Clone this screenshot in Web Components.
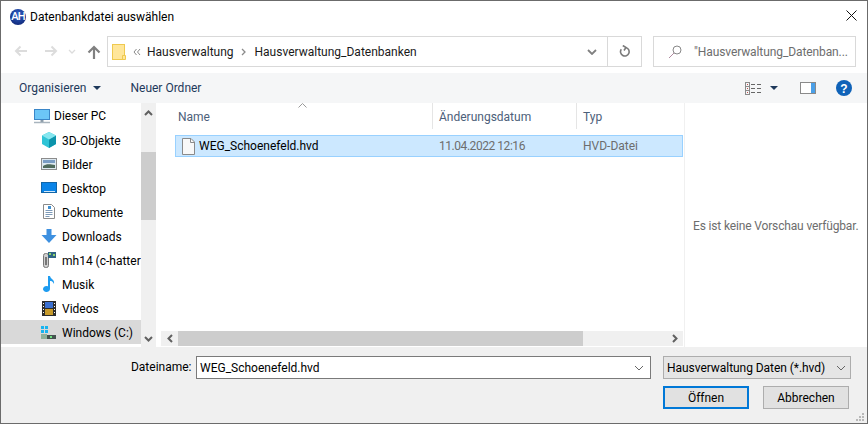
<!DOCTYPE html>
<html lang="de">
<head>
<meta charset="utf-8">
<title>Datenbankdatei auswählen</title>
<style>
  html, body { margin: 0; padding: 0; background: #fff; }
</style>
</head>
<body>
<file-dialog>
  <title-bar slot="title">Datenbankdatei auswählen</title-bar>
  <nav-bar slot="nav"></nav-bar>
  <tool-bar slot="tools"></tool-bar>
  <nav-pane slot="side"></nav-pane>
  <file-list slot="list"></file-list>
  <preview-pane slot="preview">Es ist keine Vorschau verfügbar.</preview-pane>
  <dialog-footer slot="footer"></dialog-footer>
</file-dialog>

<script>
const FONT = `font: 12px/16px Roboto, "Liberation Sans", sans-serif;`;

class FileDialog extends HTMLElement {
  constructor() {
    super();
    this.attachShadow({ mode: 'open' });
  }

  connectedCallback() {
    this.shadowRoot.innerHTML = `
      <style>
        :host {
          display: grid;
          box-sizing: border-box;
          width: 868px;
          height: 424px;
          border: 1px solid #6b6b6b;
          background: #fff;
          color: #000;
          ${FONT}
          grid-template-columns: 159px 524px 1fr;
          grid-template-rows: 32px 40px 30px 244px 1fr;
          grid-template-areas:
            "title title title"
            "nav nav nav"
            "tools tools tools"
            "side list preview"
            "footer footer footer";
        }
        ::slotted([slot=title]) { grid-area: title; }
        ::slotted([slot=nav]) { grid-area: nav; }
        ::slotted([slot=tools]) { grid-area: tools; }
        ::slotted([slot=side]) { grid-area: side; }
        ::slotted([slot=list]) { grid-area: list; }
        ::slotted([slot=preview]) { grid-area: preview; }
        ::slotted([slot=footer]) { grid-area: footer; }
      </style>
      <slot name="title"></slot>
      <slot name="nav"></slot>
      <slot name="tools"></slot>
      <slot name="side"></slot>
      <slot name="list"></slot>
      <slot name="preview"></slot>
      <slot name="footer"></slot>
    `;
  }
}

class TitleBar extends HTMLElement {
  constructor() {
    super();
    this.attachShadow({ mode: 'open' });
  }

  connectedCallback() {
    this.shadowRoot.innerHTML = `
      <style>
        :host { display: flex; align-items: center; padding: 0 0 1px 9px; gap: 4px; }
        .logo {
          width: 16px; height: 16px; border-radius: 50%;
          background: radial-gradient(circle at 50% 35%, #2f62cc, #0a1c66);
          color: #fff; font: 500 11px/16px Roboto, "Liberation Sans", sans-serif;
          text-align: center; letter-spacing: -0.8px; flex: none;
        }
        .text { flex: 1; }
        .close { width: 11px; height: 11px; margin-right: 10px; margin-top: -3px; flex: none; }
      </style>
      <span class="logo">AH</span>
      <span class="text"><slot></slot></span>
      <svg class="close" viewBox="0 0 11 11"><path d="M.5.500l10 10M10.500.500l-10 10" stroke="#111" fill="none"/></svg>
    `;
  }
}

class NavBar extends HTMLElement {
  constructor() {
    super();
    this.attachShadow({ mode: 'open' });
  }

  connectedCallback() {
    this.shadowRoot.innerHTML = `
      <style>
        :host { display: flex; align-items: flex-start; padding: 3px 12px 0 0; }
        .arrows { width: 106px; height: 30px; display: flex; align-items: center; padding-left: 13px; box-sizing: border-box; flex: none; }
        .arrows svg { display: block; flex: none; }
        .box {
          box-sizing: border-box; height: 31px; border: 1px solid #d9d9d9;
          display: flex; align-items: center;
        }
        .addr { width: 535px; flex: none; }
        .folder { margin: 0 0 0 4px; flex: none; }
        .crumbs { flex: 1; display: flex; align-items: center; color: #1a1a1a; }
        .sep { flex: none; }
        .cell { width: 33px; height: 100%; border-left: 1px solid #d9d9d9; display: flex; align-items: center; justify-content: center; flex: none; }
        .drop { flex: none; margin-right: 10px; }
        .search { width: 203px; margin-left: 11px; flex: none; color: #6d6d6d; white-space: nowrap; overflow: hidden; letter-spacing: -0.1px; }
      </style>
      <div class="arrows">
        <svg width="14" height="12" viewBox="0 0 14 12"><path d="M13 6H2M6.500 1.500L2 6l4.500 4.500" stroke="#dcdcdc" stroke-width="2" fill="none"/></svg>
        <svg width="14" height="12" viewBox="0 0 14 12" style="margin-left:16px"><path d="M1 6h11M7.500 1.500L12 6l-4.500 4.500" stroke="#dcdcdc" stroke-width="2" fill="none"/></svg>
        <svg width="8" height="5" viewBox="0 0 8 5" style="margin-left:10px"><path d="M1 1l3 3 3-3" stroke="#dcdcdc" stroke-width="1.300" fill="none"/></svg>
        <svg width="14" height="14" viewBox="0 0 14 14" style="margin-left:11px;margin-top:1px"><path d="M7 14V2M1.500 7.500L7 2l5.500 5.500" stroke="#808080" stroke-width="2.200" fill="none"/></svg>
      </div>
      <div class="box addr">
        <svg class="folder" width="14" height="16" viewBox="0 0 14 16"><rect x=".5" y=".5" width="12" height="15" fill="#ffe69a" stroke="#efc94f"/><path d="M10.500 15.500v-4h3v4z" fill="#ffe69a" stroke="#efc94f"/></svg>
        <div class="crumbs">
          <svg class="sep" width="8" height="8" viewBox="0 0 8 8" style="margin:0 6px 0 7px"><path d="M3.500 1L1 4l2.500 3M7 1L4.500 4 7 7" stroke="#8a8a8a" fill="none"/></svg>
          <span>Hausverwaltung</span>
          <svg class="sep" width="5" height="8" viewBox="0 0 5 8" style="margin:0 9px 0 7px"><path d="M1 1l3 3-3 3" stroke="#8a8a8a" stroke-width="1.300" fill="none"/></svg>
          <span>Hausverwaltung_Datenbanken</span>
        </div>
        <svg class="drop" width="10" height="6" viewBox="0 0 10 6"><path d="M1 1l4 4 4-4" stroke="#808080" stroke-width="1.800" fill="none"/></svg>
        <div class="cell">
          <svg width="12" height="13" viewBox="0 0 12 13"><path d="M6.800 2.500a4.300 4.300 0 1 1-4.500 1.700M3.800 .5L7 2.500 5 5.500" stroke="#7a7a7a" stroke-width="1.600" fill="none"/></svg>
        </div>
      </div>
      <div class="box search">
        <svg width="14" height="14" viewBox="0 0 14 14" style="margin-left:14px;flex:none"><circle cx="9" cy="5" r="4" stroke="#888" fill="none"/><path d="M6 8l-5 5" stroke="#b08aa0" fill="none"/></svg>
        <span style="margin-left:12px">"Hausverwaltung_Datenban...</span>
      </div>
    `;
  }
}

class ToolBar extends HTMLElement {
  constructor() {
    super();
    this.attachShadow({ mode: 'open' });
  }

  connectedCallback() {
    this.shadowRoot.innerHTML = `
      <style>
        :host { display: flex; align-items: center; background: #f5f6f7; color: #1e395b; padding: 0 15px 0 18px; }
        .caret { margin-left: 7px; flex: none; }
        .new { margin-left: 29px; flex: 1; }
        svg { display: block; flex: none; }
      </style>
      <span>Organisieren</span>
      <svg class="caret" width="8" height="4" viewBox="0 0 8 4"><path d="M0 0h8L4 4z" fill="#1e395b"/></svg>
      <span class="new">Neuer Ordner</span>
      <svg width="16" height="13" viewBox="0 0 16 13"><g fill="none" stroke="#8a8a8a"><rect x=".5" y=".5" width="4" height="12"/><path d="M.5 4.500h4M.5 8.500h4"/><path d="M6 2.500h4M12 2.500h4M6 6.500h4M12 6.500h4M6 10.500h4M12 10.500h4" stroke="#666"/></g><path d="M2 2h1v1H2zM2 6h1v1H2zM2 10h1v1H2z" fill="#c0504d"/></svg>
      <svg width="8" height="4" viewBox="0 0 8 4" style="margin-left:9px"><path d="M0 0h8L4 4z" fill="#1e395b"/></svg>
      <svg width="16" height="12" viewBox="0 0 16 12" style="margin-left:22px"><rect x=".5" y=".5" width="15" height="11" fill="#fff" stroke="#8a8a8a"/><rect x="11" y="1" width="4" height="10" fill="#4ba0e8"/></svg>
      <svg width="16" height="16" viewBox="0 0 16 16" style="margin-left:20px"><circle cx="8" cy="8" r="8" fill="#0f62b8"/><text x="8" y="12.500" text-anchor="middle" font-family="Liberation Sans" font-weight="bold" font-size="12" fill="#fff">?</text></svg>
    `;
  }
}

class NavPane extends HTMLElement {
  constructor() {
    super();
    this.attachShadow({ mode: 'open' });
  }

  connectedCallback() {
    const items = [
      ['Dieser PC', 'pc', true],
      ['3D-Objekte', 'cube'],
      ['Bilder', 'pic'],
      ['Desktop', 'desk'],
      ['Dokumente', 'doc'],
      ['Downloads', 'down'],
      ['mh14 (c-hatter', 'usb'],
      ['Musik', 'music'],
      ['Videos', 'video'],
      ['Windows (C:)', 'win']
    ];
    const icons = {
      pc: `<rect x="1.500" y="2.500" width="15" height="10" fill="#6cc6f7" stroke="#3a86c8"/><path d="M9 13v2" stroke="#8a9aa8" stroke-width="3"/><path d="M1 15.500h16" stroke="#a8b4be" stroke-width="1.500"/>`,
      cube: `<path d="M9 1l7 3.500v8.500l-7 4-7-4V4.500z" fill="#2fc4d6"/><path d="M9 8.500l7-4v8.500l-7 4z" fill="#0c93ab"/><path d="M2 4.500l7 4 7-4L9 1z" fill="#86e6ef"/>`,
      pic: `<rect x="1.500" y="3.500" width="15" height="11" fill="#dce8f0" stroke="#8c8c8c"/><path d="M3 5h12v3H3z" fill="#7a9cc4"/><path d="M3 11c3-2 6-2 12-1v3H3z" fill="#4f6a5c"/>`,
      desk: `<rect x="1.500" y="3.500" width="15" height="10" fill="#0a84e8" stroke="#1266a8"/><path d="M4 12.500h11" stroke="#cfe8fb"/>`,
      doc: `<path d="M3.500 1.500h8l3 3v11h-11z" fill="#fff" stroke="#8a8a8a"/><path d="M5.500 7.500h7M5.500 9.500h7M5.500 11.500h7M5.500 13.500h4" stroke="#7d9ab8"/><path d="M8 3h3v3H8z" fill="#3f8fd0"/>`,
      down: `<path d="M6.500 2h5v6h5L9 16 1.500 8h5z" fill="#3d90e0"/>`,
      usb: `<rect x="3.500" y="2.500" width="5" height="14" rx="2" fill="#cfcfcf" stroke="#777"/><rect x="5" y="6" width="2" height="8" fill="#777"/><rect x="8" y="1" width="8" height="6" fill="#2f6484"/><path d="M9 2h2v2H9zM13 3h2v2h-2z" fill="#8fd46a"/>`,
      music: `<path d="M8 1h2c.5 3 5 3.500 4 8-1-2.500-2.500-3-4-3v8a3.500 3 0 1 1-2-2.700z" fill="#1e9cf0"/>`,
      video: `<rect x="2" y="2" width="14" height="15" fill="#2c2c2c"/><rect x="5" y="3" width="8" height="6" fill="#3a6fd0"/><rect x="5" y="10" width="8" height="6" fill="#c79a2a"/><path d="M3 4h1v1H3zM3 7h1v1H3zM3 10h1v1H3zM3 13h1v1H3zM14 4h1v1h-1zM14 7h1v1h-1zM14 10h1v1h-1zM14 13h1v1h-1z" fill="#fff"/>`,
      win: `<path d="M1 3h3v3H1zM5 3h3v3H5zM1 7h3v3H1zM5 7h3v3H5z" fill="#18b4f0"/><path d="M1 11h6v5H1z" fill="#8fb09a"/><path d="M7 12h9v4H7z" fill="#44524f"/><path d="M10 13h2v2h-2z" fill="#6fe080"/>`
    };
    const rows = items.map(([label, icon, top], i) => `
      <div class="row ${top ? 'top' : ''} ${i === items.length - 1 ? 'sel' : ''}">
        <svg width="18" height="18" viewBox="${top ? '0' : '1'} 0 18 18">${icons[icon]}</svg>
        <span>${label}</span>
      </div>`).join('');
    this.shadowRoot.innerHTML = `
      <style>
        :host { display: flex; background: #fff; }
        .tree { width: 140px; flex: none; display: flex; flex-direction: column; overflow: hidden; }
        .row { height: 24px; display: flex; align-items: center; padding-left: 40px; gap: 3px; white-space: nowrap; flex: none; color: #000; }
        .row span { padding-top: 2px; }
        .row.top { padding-left: 32px; height: 25px; }
        .row.top span { padding-top: 0; }
        .row.sel { background: #d9d9d9; }
        .row svg { flex: none; }
        .bar { width: 15px; height: 100%; background: #f0f0f0; display: flex; flex-direction: column; align-items: center; flex: none; }
        .btn { height: 17px; display: flex; align-items: center; justify-content: center; flex: none; }
        .thumb { background: #cdcdcd; width: 100%; height: 68px; margin-top: 29px; flex: none; }
        .grow { flex: 1; }
      </style>
      <div class="tree">${rows}</div>
      <div class="bar">
        <div class="btn" style="height:20px"><svg width="9" height="6" viewBox="0 0 9 6"><path d="M1 5l3.500-3.500L8 5" stroke="#606060" stroke-width="2" fill="none"/></svg></div>
        <div class="thumb"></div>
        <div class="grow"></div>
        <div class="btn"><svg width="9" height="6" viewBox="0 0 9 6"><path d="M1 1l3.500 3.500L8 1" stroke="#606060" stroke-width="2" fill="none"/></svg></div>
      </div>
    `;
  }
}

class FileList extends HTMLElement {
  constructor() {
    super();
    this.attachShadow({ mode: 'open' });
  }

  connectedCallback() {
    this.shadowRoot.innerHTML = `
      <style>
        :host { display: flex; flex-direction: column; position: relative; background: #fff; color: #000; }
        .head { display: grid; grid-template-columns: 273px 144px 1fr; height: 26px; flex: none; color: #4c607a; }
        .head div { display: flex; align-items: center; padding: 2px 0 0 6px; border-right: 1px solid #e5e5e5; }
        .head div:first-child { padding-left: 18px; }
        .head div:last-child { border-right: 0; }
        .sort { position: absolute; left: 138px; top: 0; }
        .rows { flex: 1; padding: 6px 1px 0 15px; }
        .row {
          box-sizing: border-box; height: 22px; background: #cce8ff; border: 1px solid #99d1ff;
          display: grid; grid-template-columns: 258px 144px 1fr; align-items: center;
        }
        .name { display: flex; align-items: center; gap: 4px; padding-left: 6px; }
        .meta { color: #6d6d6d; padding-left: 5px; }
        .date { letter-spacing: -0.45px; }
        .hbar { height: 15px; background: #f0f0f0; display: flex; align-items: center; flex: none; margin: 0 1px 1px 1px; }
        .hbar .btn { width: 17px; display: flex; justify-content: center; flex: none; }
        .thumb { height: 100%; width: 405px; background: #cdcdcd; flex: none; }
        .grow { flex: 1; }
      </style>
      <svg class="sort" width="9" height="5" viewBox="0 0 9 5"><path d="M.5 4.500l4-4 4 4" stroke="#9a9a9a" fill="none"/></svg>
      <div class="head">
        <div>Name</div>
        <div>Änderungsdatum</div>
        <div>Typ</div>
      </div>
      <div class="rows">
        <div class="row">
          <div class="name">
            <svg width="13" height="17" viewBox="0 0 13 17" style="flex:none"><path d="M.5.500h8.500l3.500 3.500v12.500H.5z" fill="#f8f8f8" stroke="#8a8a8a"/><path d="M8.500.500v4h4" fill="none" stroke="#8a8a8a"/></svg>
            <span>WEG_Schoenefeld.hvd</span>
          </div>
          <div class="meta date">11.04.2022 12:16</div>
          <div class="meta">HVD-Datei</div>
        </div>
      </div>
      <div class="hbar">
        <div class="btn"><svg width="6" height="9" viewBox="0 0 6 9"><path d="M5 1L1.500 4.500 5 8" stroke="#606060" stroke-width="2" fill="none"/></svg></div>
        <div class="thumb"></div>
        <div class="grow"></div>
        <div class="btn"><svg width="6" height="9" viewBox="0 0 6 9"><path d="M1 1l3.500 3.500L1 8" stroke="#606060" stroke-width="2" fill="none"/></svg></div>
      </div>
    `;
  }
}

class PreviewPane extends HTMLElement {
  constructor() {
    super();
    this.attachShadow({ mode: 'open' });
  }

  connectedCallback() {
    this.shadowRoot.innerHTML = `
      <style>
        :host { display: flex; align-items: center; padding: 2px 0 0 8px; background: #fff; color: #6d6d6d; white-space: nowrap; overflow: hidden; border-left: 1px solid #f0f0f0; letter-spacing: -0.15px; }
      </style>
      <slot></slot>
    `;
  }
}

class DialogFooter extends HTMLElement {
  constructor() {
    super();
    this.attachShadow({ mode: 'open' });
  }

  connectedCallback() {
    this.shadowRoot.innerHTML = `
      <style>
        :host { display: grid; background: #f0f0f0; grid-template-columns: 195px 455px 12px 188px; grid-template-rows: 23px 23px; row-gap: 7px; padding-top: 9px; position: relative; }
        label { text-align: right; padding-right: 4.500px; line-height: 23px; }
        .input { box-sizing: border-box; background: #fff; border: 1px solid #7a7a7a; display: flex; align-items: center; justify-content: space-between; padding: 0 6px 0 3px; }
        .combo { grid-column: 4; box-sizing: border-box; background: #e5e5e5; border: 1px solid #adadad; display: flex; align-items: center; justify-content: space-between; padding: 0 4px 0 3px; white-space: nowrap; letter-spacing: -0.05px; }
        .buttons { grid-column: 1 / -1; display: flex; justify-content: flex-end; gap: 14px; padding-right: 2px; }
        .btn { box-sizing: border-box; width: 86px; height: 23px; background: #e1e1e1; border: 1px solid #adadad; display: flex; align-items: center; justify-content: center; }
        .btn.def { border: 2px solid #0078d7; }
        svg { display: block; flex: none; }
        .grip { position: absolute; right: 2px; bottom: 1px; }
      </style>
      <label>Dateiname:</label>
      <div class="input"><span>WEG_Schoenefeld.hvd</span>
        <svg width="10" height="6" viewBox="0 0 10 6"><path d="M1 1l4 4 4-4" stroke="#666" fill="none"/></svg></div>
      <div></div>
      <div class="combo"><span>Hausverwaltung Daten (*.hvd)</span>
        <svg width="10" height="6" viewBox="0 0 10 6"><path d="M1 1l4 4 4-4" stroke="#666" fill="none"/></svg></div>
      <div class="buttons">
        <div class="btn def">Öffnen</div>
        <div class="btn">Abbrechen</div>
      </div>
      <svg class="grip" width="10" height="10" viewBox="0 0 10 10"><path d="M7 1h2v2H7zM4 4h2v2H4zM7 4h2v2H7zM1 7h2v2H1zM4 7h2v2H4zM7 7h2v2H7z" fill="#b8b8b8"/></svg>
    `;
  }
}

customElements.define('file-dialog', FileDialog);
customElements.define('title-bar', TitleBar);
customElements.define('nav-bar', NavBar);
customElements.define('tool-bar', ToolBar);
customElements.define('nav-pane', NavPane);
customElements.define('file-list', FileList);
customElements.define('preview-pane', PreviewPane);
customElements.define('dialog-footer', DialogFooter);
</script>
</body>
</html>
